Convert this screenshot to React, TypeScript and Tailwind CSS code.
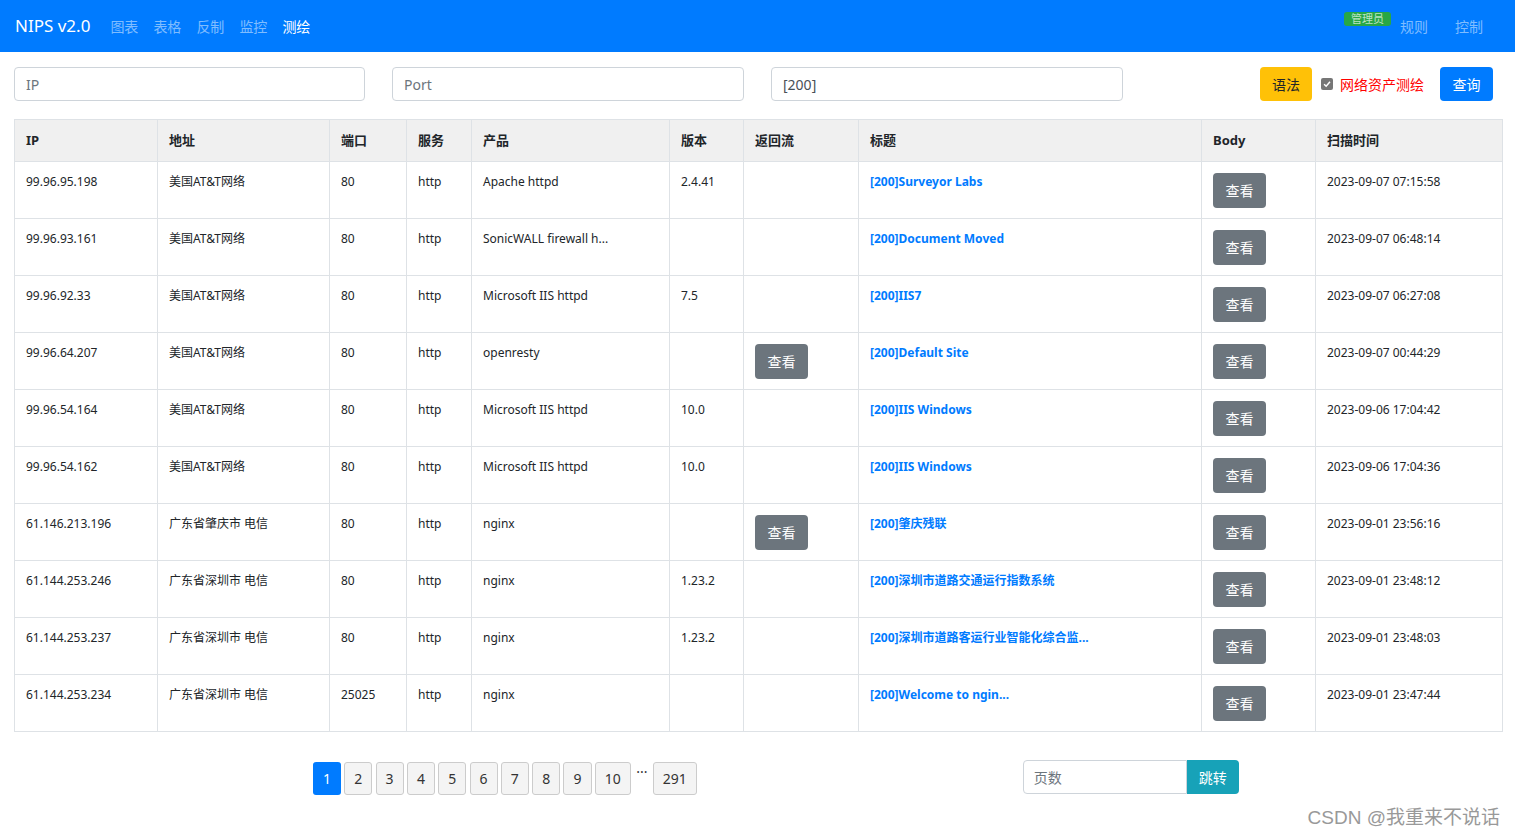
import React from "react"

const font = { fontFamily: '"Noto Sans", "Noto Sans CJK SC", sans-serif' }

type Row = {
  ip: string
  addr: string
  port: string
  service: string
  product: string
  version: string
  stream: boolean
  title: string
  time: string
}

const rows: Row[] = [
  { ip: "99.96.95.198", addr: "美国AT&T网络", port: "80", service: "http", product: "Apache httpd", version: "2.4.41", stream: false, title: "[200]Surveyor Labs", time: "2023-09-07 07:15:58" },
  { ip: "99.96.93.161", addr: "美国AT&T网络", port: "80", service: "http", product: "SonicWALL firewall h...", version: "", stream: false, title: "[200]Document Moved", time: "2023-09-07 06:48:14" },
  { ip: "99.96.92.33", addr: "美国AT&T网络", port: "80", service: "http", product: "Microsoft IIS httpd", version: "7.5", stream: false, title: "[200]IIS7", time: "2023-09-07 06:27:08" },
  { ip: "99.96.64.207", addr: "美国AT&T网络", port: "80", service: "http", product: "openresty", version: "", stream: true, title: "[200]Default Site", time: "2023-09-07 00:44:29" },
  { ip: "99.96.54.164", addr: "美国AT&T网络", port: "80", service: "http", product: "Microsoft IIS httpd", version: "10.0", stream: false, title: "[200]IIS Windows", time: "2023-09-06 17:04:42" },
  { ip: "99.96.54.162", addr: "美国AT&T网络", port: "80", service: "http", product: "Microsoft IIS httpd", version: "10.0", stream: false, title: "[200]IIS Windows", time: "2023-09-06 17:04:36" },
  { ip: "61.146.213.196", addr: "广东省肇庆市 电信", port: "80", service: "http", product: "nginx", version: "", stream: true, title: "[200]肇庆残联", time: "2023-09-01 23:56:16" },
  { ip: "61.144.253.246", addr: "广东省深圳市 电信", port: "80", service: "http", product: "nginx", version: "1.23.2", stream: false, title: "[200]深圳市道路交通运行指数系统", time: "2023-09-01 23:48:12" },
  { ip: "61.144.253.237", addr: "广东省深圳市 电信", port: "80", service: "http", product: "nginx", version: "1.23.2", stream: false, title: "[200]深圳市道路客运行业智能化综合监...", time: "2023-09-01 23:48:03" },
  { ip: "61.144.253.234", addr: "广东省深圳市 电信", port: "25025", service: "http", product: "nginx", version: "", stream: false, title: "[200]Welcome to ngin...", time: "2023-09-01 23:47:44" },
]

const headers = [
  { label: "IP", w: "w-[143px]" },
  { label: "地址", w: "w-[172px]" },
  { label: "端口", w: "w-[77px]" },
  { label: "服务", w: "w-[65px]" },
  { label: "产品", w: "w-[198px]" },
  { label: "版本", w: "w-[74px]" },
  { label: "返回流", w: "w-[115px]" },
  { label: "标题", w: "w-[343px]" },
  { label: "Body", w: "w-[114px]" },
  { label: "扫描时间", w: "w-[187px]" },
]

function ViewButton() {
  return (
    <button className="h-[35px] w-[53px] rounded-[4px] bg-[#6c757d] text-[14px] text-white">查看</button>
  )
}

const cell = "border border-[#dee2e6] px-[11px] pt-[11px] align-top text-[12px] leading-[18px]"
const td = `${cell} text-[#212529]`
const tdLink = `${cell} font-bold text-[#007bff]`

export default function App() {
  const pages = ["1", "2", "3", "4", "5", "6", "7", "8", "9", "10"]
  return (
    <div className="relative min-h-[837px] bg-white" style={font}>
      <nav className="flex h-[52px] items-center bg-[#007bff] px-[15px]">
        <span className="mr-[20px] text-[17px] text-white">NIPS v2.0</span>
        <div className="flex gap-[15px] text-[14px]">
          <span className="text-white/50">图表</span>
          <span className="text-white/50">表格</span>
          <span className="text-white/50">反制</span>
          <span className="text-white/50">监控</span>
          <span className="text-white">测绘</span>
        </div>
        <div className="ml-auto flex items-center pr-[17px] text-[14px]">
          <span className="mb-[14px] rounded-[3px] bg-[#28a745] px-[7px] text-[11px] leading-[14px] text-white/70">管理员</span>
          <span className="ml-[9px] text-white/50">规则</span>
          <span className="ml-[27px] text-white/50">控制</span>
        </div>
      </nav>

      <div className="mt-[15px] flex items-center px-[14px]">
        <input className="h-[34px] w-[351px] rounded-[4px] border border-[#ced4da] px-[11px] text-[14px] placeholder-[#6c757d] outline-none" placeholder="IP" />
        <input className="ml-[27px] h-[34px] w-[352px] rounded-[4px] border border-[#ced4da] px-[11px] text-[14px] placeholder-[#6c757d] outline-none" placeholder="Port" />
        <input className="ml-[27px] h-[34px] w-[352px] rounded-[4px] border border-[#ced4da] px-[11px] text-[14px] text-[#495057] outline-none" defaultValue="[200]" />
        <button className="ml-[137px] h-[34px] w-[52px] rounded-[4px] bg-[#ffc107] text-[14px] text-[#212529]">语法</button>
        <span className="ml-[9px] flex h-[12px] w-[12px] items-center justify-center rounded-[2px] bg-[#767676]">
          <svg viewBox="0 0 12 12" className="h-[10px] w-[10px]">
            <path d="M2.5 6.2 L5 8.6 L9.6 3.4" stroke="white" strokeWidth="1.8" fill="none" />
          </svg>
        </span>
        <span className="ml-[7px] text-[14px] text-[#ff0000]">网络资产测绘</span>
        <button className="ml-[16px] h-[34px] w-[53px] rounded-[4px] bg-[#007bff] text-[14px] text-white">查询</button>
      </div>

      <div className="mt-[18px] px-[14px]">
        <table className="w-[1488px] table-fixed border-collapse">
          <thead>
            <tr className="h-[42px] bg-[#f0f0f0]">
              {headers.map((h) => (
                <th key={h.label} className={`${h.w} border border-[#dee2e6] px-[11px] text-left align-middle text-[13px] font-bold text-[#212529]`}>
                  {h.label}
                </th>
              ))}
            </tr>
          </thead>
          <tbody>
            {rows.map((r, i) => (
              <tr key={i} className="h-[57px]">
                <td className={td}>{r.ip}</td>
                <td className={td}>{r.addr}</td>
                <td className={td}>{r.port}</td>
                <td className={td}>{r.service}</td>
                <td className={td}>{r.product}</td>
                <td className={td}>{r.version}</td>
                <td className={td}>{r.stream && <ViewButton />}</td>
                <td className={tdLink}>{r.title}</td>
                <td className={td}><ViewButton /></td>
                <td className={td}>{r.time}</td>
              </tr>
            ))}
          </tbody>
        </table>
      </div>

      <div className="mt-[28px] flex items-center">
        <div className="ml-[313px] flex items-start gap-[3.3px]">
          {pages.map((p, i) => (
            <span
              key={p}
              className={
                i === 0
                  ? "flex h-[33px] min-w-[28px] items-center justify-center rounded-[3px] bg-[#007bff] px-[9px] text-[14px] text-white"
                  : "flex h-[33px] min-w-[28px] items-center justify-center rounded-[3px] border border-[#cccccc] bg-[#f4f4f4] px-[9px] text-[14px] text-[#333333]"
              }
            >
              {p}
            </span>
          ))}
          <span className="mx-[2px] text-[14px] leading-[20px] text-[#333333]">···</span>
          <span className="flex h-[33px] items-center justify-center rounded-[3px] border border-[#cccccc] bg-[#f4f4f4] px-[9px] text-[14px] text-[#333333]">291</span>
        </div>
        <div className="mb-[2px] ml-[326px] flex">
          <input className="h-[34px] w-[164px] rounded-l-[4px] border border-[#ced4da] px-[10px] text-[14px] placeholder-[#6c757d] outline-none" placeholder="页数" />
          <button className="h-[34px] w-[52px] rounded-r-[4px] bg-[#17a2b8] text-[14px] text-white">跳转</button>
        </div>
      </div>

      <span className="absolute bottom-[5px] right-[15px] text-[19px] text-[#999999]" style={{ fontFamily: '"Liberation Sans", "Noto Sans CJK SC", sans-serif' }}>
        CSDN @我重来不说话
      </span>
    </div>
  )
}
